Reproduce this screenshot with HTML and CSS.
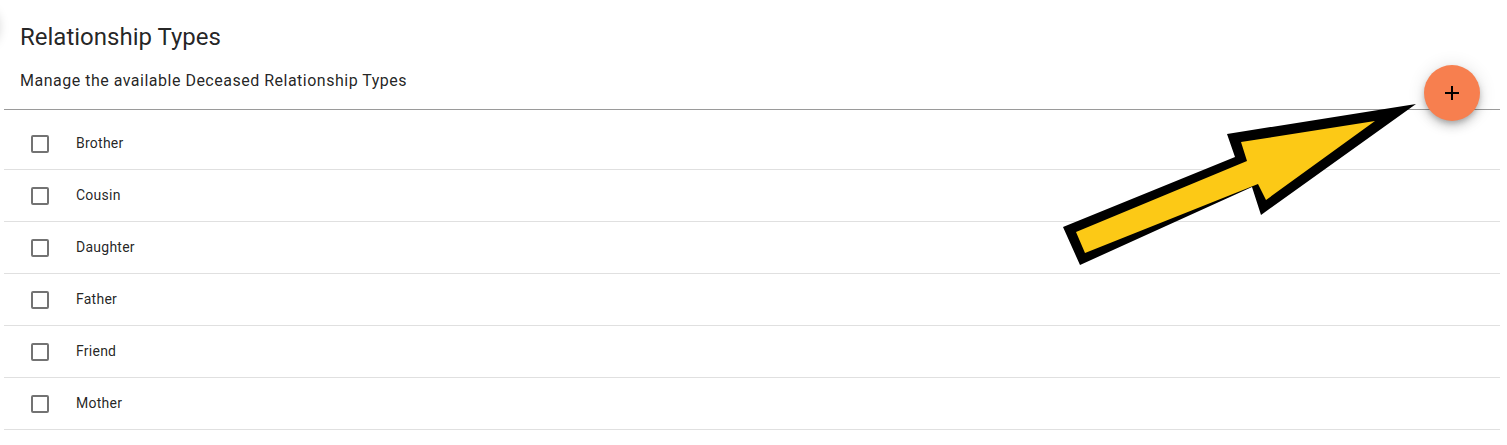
FILE: index.html
```html
<!DOCTYPE html>
<html lang="en">
<head>
  <meta charset="UTF-8">
  <title>Relationship Types</title>
  <link rel="stylesheet" href="styles.css">
</head>
<body>
  <div class="edge-btn"></div>

  <div class="card">
    <div class="card-header">
      <h1 class="title">Relationship Types</h1>
      <p class="subtitle">Manage the available Deceased Relationship Types</p>
    </div>

    <button class="fab" title="Add">
      <svg width="24" height="24" viewBox="0 0 24 24"><path d="M19 13h-6v6h-2v-6H5v-2h6V5h2v6h6v2z" fill="#000"/></svg>
    </button>

    <ul class="type-list">
      <li class="type-row"><span class="check"></span><span class="name">Brother</span></li>
      <li class="type-row"><span class="check"></span><span class="name">Cousin</span></li>
      <li class="type-row"><span class="check"></span><span class="name">Daughter</span></li>
      <li class="type-row"><span class="check"></span><span class="name">Father</span></li>
      <li class="type-row"><span class="check"></span><span class="name">Friend</span></li>
      <li class="type-row"><span class="check"></span><span class="name">Mother</span></li>
    </ul>
  </div>

  <!-- callout arrow pointing at the add button -->
  <svg class="callout" width="360" height="170" viewBox="1060 100 360 170">
    <polygon points="1080,265 1063,227 1235,157 1227,134 1416,104 1261,215 1252,187" fill="#000"/>
    <polygon points="1085,253 1076,232 1247,161 1241,142 1375,121 1266,200 1258,184" fill="#fcc916"/>
  </svg>
</body>
</html>
```

FILE: styles.css
```css
body { margin: 0; font-family: Roboto, "Liberation Sans", sans-serif; color: rgba(0,0,0,.87); background: #fff; position: relative; overflow: hidden; height: 445px; }
.edge-btn { position: absolute; left: -44px; top: 4px; width: 42px; height: 42px; border-radius: 50%; background: #fff; box-shadow: 0 2px 12px rgba(0,0,0,.22); }
.card { position: relative; margin: 0 7px 0 4px; }
.card-header { padding: 21px 16px 16px; border-bottom: 1px solid #9a9a9a; }
.title { margin: 0; font-size: 24px; font-weight: 400; line-height: 32px; }
.subtitle { margin: 16px 0 0; font-size: 16px; line-height: 24px; letter-spacing: .5px; }
.fab { position: absolute; top: 65px; right: 20px; width: 56px; height: 56px; border: 0; border-radius: 50%; background: #f77f4f; display: flex; align-items: center; justify-content: center; padding: 0; box-shadow: 0 3px 5px -1px rgba(0,0,0,.2), 0 6px 10px 0 rgba(0,0,0,.14), 0 1px 18px 0 rgba(0,0,0,.12); }
.type-list { list-style: none; margin: 0; padding: 8px 0 0; }
.type-row { height: 51px; border-bottom: 1px solid #e0e0e0; display: flex; align-items: center; padding-left: 27px; font-size: 14px; letter-spacing: .25px; }
.name { margin-bottom: 2px; }
.check { width: 14px; height: 14px; border: 2px solid #737373; border-radius: 2px; margin-right: 27px; }
.callout { position: absolute; left: 1060px; top: 100px; }
```
